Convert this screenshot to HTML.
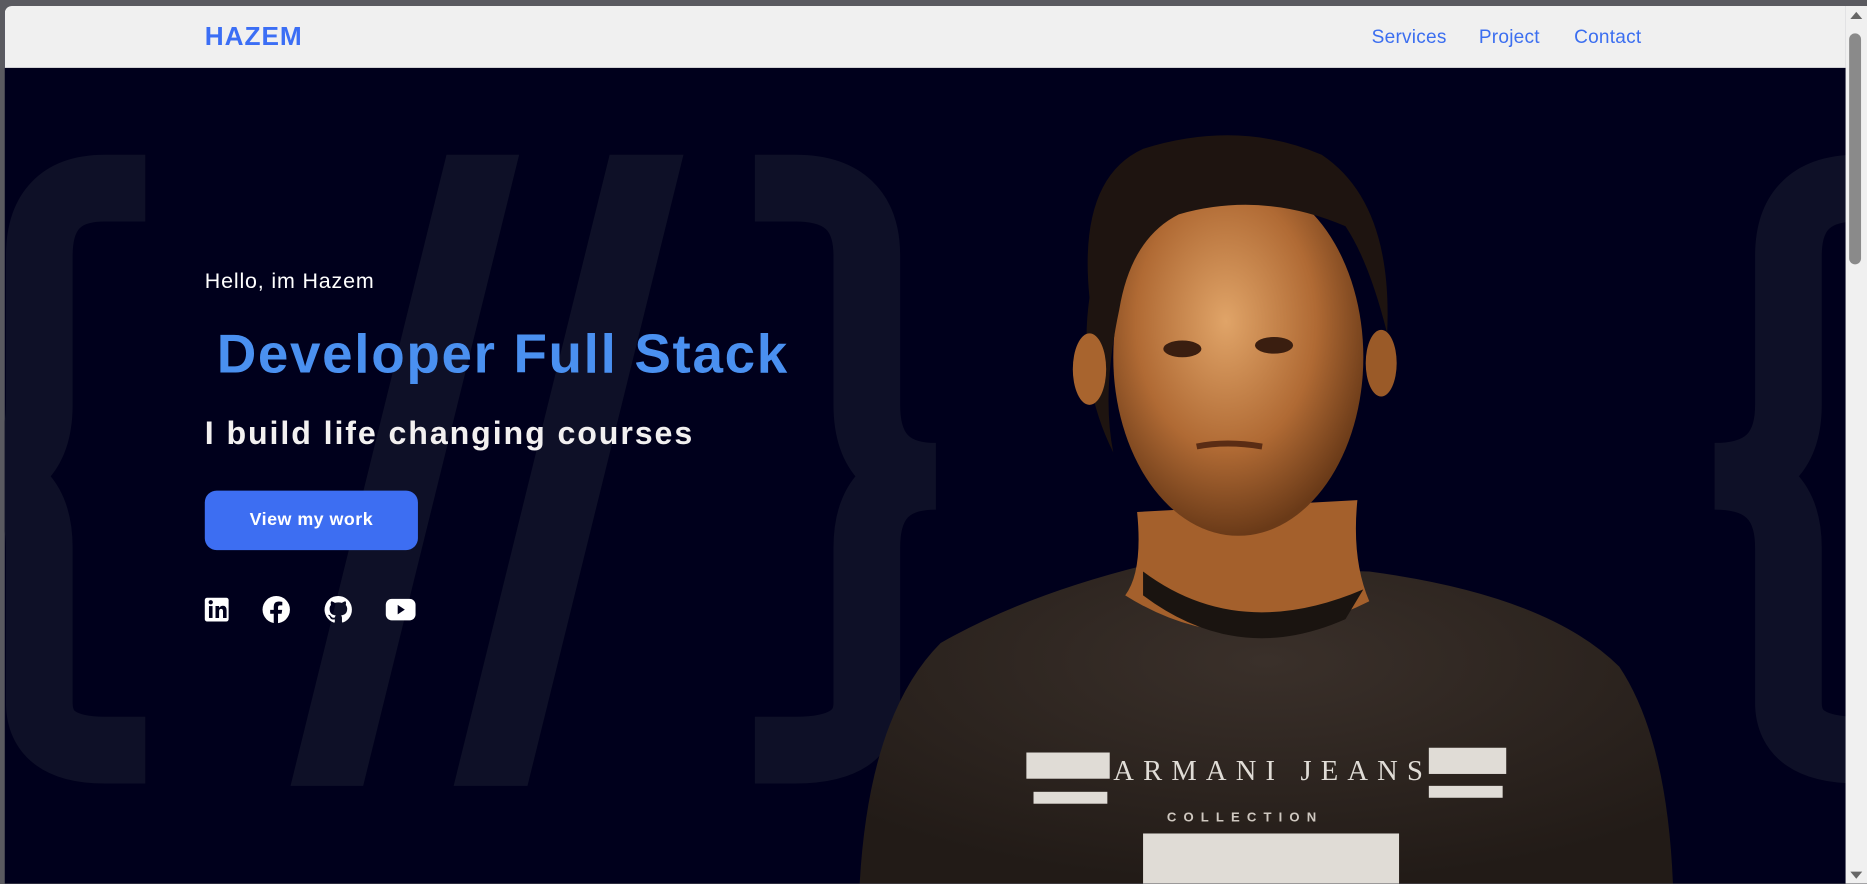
<!DOCTYPE html>
<html><head><meta charset="utf-8">
<style>
html,body{margin:0;padding:0;width:1867px;height:883px;overflow:hidden;background:#5a5a60;}
#s{position:absolute;left:0;top:0;width:1568px;height:742px;transform:scale(1.19069);transform-origin:0 0;font-family:"Liberation Sans",sans-serif;}
#win{position:absolute;left:4px;top:5px;width:1564px;height:737px;background:#00001c;border-radius:6px 0 0 0;overflow:hidden;}
#hdr{position:absolute;left:0;top:0;width:1546px;height:52px;background:#f0f0f0;}
.logo{position:absolute;left:168px;top:13px;font-size:22px;font-weight:bold;color:#3b6ef5;letter-spacing:0.8px}
.nav{position:absolute;top:18px;font-size:16px;color:#3b6ef0;letter-spacing:0.2px}
#sb{position:absolute;left:1546px;top:0;width:18px;height:737px;background:#f0f0f0}
#thumb{position:absolute;left:3px;top:23px;width:10px;height:194px;background:#8a8a8a;border-radius:5px}
.t{position:absolute;color:#fff;white-space:nowrap}
.btn{position:absolute;left:168px;top:407px;width:179px;height:50px;background:#3d6ef2;border-radius:10px;color:#fff;font-weight:bold;font-size:15px;text-align:center;line-height:50px;letter-spacing:0.4px}
</style></head><body>
<div id="s">
<div id="win">
<svg style="position:absolute;left:-4px;top:-5px" width="1568" height="742" viewBox="0 0 1568 742">
 <g fill="none" stroke="#0e1027" stroke-width="56">
  <path d="M122,158 H88 Q33,158 33,215 V340 Q33,400 -25,400 Q33,400 33,460 V590 Q33,630 88,630 H122"/>
  <path d="M634,158 H668 Q728,158 728,215 V340 Q728,400 786,400 Q728,400 728,460 V590 Q728,630 668,630 H634"/>
  <path d="M1580,158 H1560 Q1502,158 1502,215 V340 Q1502,400 1440,400 Q1502,400 1502,460 V590 Q1502,630 1560,630 H1580"/>
 </g>
 <g fill="#0e1027">
  <polygon points="375,130 436,130 305,660 244,660"/>
  <polygon points="512,130 574,130 443,660 381,660"/>
 </g>
 <defs>
  <radialGradient id="sk" cx="0.45" cy="0.4" r="0.6"><stop offset="0" stop-color="#e0a468"/><stop offset="0.6" stop-color="#b06a34"/><stop offset="1" stop-color="#6a3a18"/></radialGradient>
  <radialGradient id="sh" cx="0.5" cy="0.3" r="0.7"><stop offset="0" stop-color="#3a302a"/><stop offset="1" stop-color="#221b17"/></radialGradient>
 </defs>
 <path d="M722,742 Q730,600 790,540 Q860,500 960,475 L1150,480 Q1300,500 1360,560 Q1400,620 1405,742 Z" fill="url(#sh)"/>
 <path d="M955,430 Q960,480 945,500 Q1040,560 1150,505 Q1135,470 1140,420 Z" fill="#a4602c"/>
 <path d="M960,480 Q1040,540 1145,495 L1130,520 Q1040,560 960,500Z" fill="#1a1410"/>
 <ellipse cx="1040" cy="300" rx="105" ry="150" fill="url(#sk)"/>
 <path d="M915,250 Q905,150 960,125 Q1040,100 1110,130 Q1170,170 1165,280 Q1150,220 1130,190 Q1060,160 990,180 Q950,200 940,260 Q925,330 935,380 Q905,320 915,250Z" fill="#1e1410"/>
 <ellipse cx="915" cy="310" rx="14" ry="30" fill="#a8642e"/>
 <ellipse cx="1160" cy="305" rx="13" ry="28" fill="#9a5a28"/>
 <ellipse cx="993" cy="293" rx="16" ry="7" fill="#3a1e10"/>
 <ellipse cx="1070" cy="290" rx="16" ry="7" fill="#3a1e10"/>
 <path d="M1005,375 Q1030,370 1060,375" stroke="#5a2c14" stroke-width="5" fill="none"/>
 <g fill="#e0dcd6">
  <rect x="862" y="632" width="70" height="22"/><rect x="1200" y="628" width="65" height="22"/>
  <rect x="868" y="665" width="62" height="10"/><rect x="1200" y="660" width="62" height="10"/>
  <rect x="960" y="700" width="215" height="42"/>
 </g>
 <text x="935" y="655" fill="#e0dcd6" font-family="Liberation Serif,serif" font-size="24" textLength="260">ARMANI JEANS</text>
 <text x="980" y="690" fill="#cfc8c0" font-family="Liberation Sans,sans-serif" font-size="11" font-weight="bold" letter-spacing="6">COLLECTION</text>
</svg>
<div id="hdr">
 <div class="logo">HAZEM</div>
 <div class="nav" style="left:1148px">Services</div>
 <div class="nav" style="left:1238px">Project</div>
 <div class="nav" style="left:1318px">Contact</div>
</div>
<div id="sb"><div style="position:absolute;left:4px;top:5px;width:0;height:0;border-left:5px solid transparent;border-right:5px solid transparent;border-bottom:6px solid #666"></div><div id="thumb"></div><div style="position:absolute;left:4px;top:727px;width:0;height:0;border-left:5px solid transparent;border-right:5px solid transparent;border-top:6px solid #666"></div></div>
<div class="t" style="left:168px;top:221px;font-size:18px;letter-spacing:0.7px">Hello, im Hazem</div>
<div class="t" style="left:178px;top:265px;font-size:46px;font-weight:bold;color:#4a90f0;letter-spacing:1.4px">Developer Full Stack</div>
<div class="t" style="left:168px;top:344px;font-size:27px;font-weight:bold;letter-spacing:1.6px;color:#f2f0f0">I build life changing courses</div>
<div class="btn">View my work</div>
<svg style="position:absolute;left:164px;top:495px" width="190" height="32" viewBox="0 0 190 32">
 <rect x="4" y="2" width="20" height="20" rx="2" fill="#fff"/>
 <rect x="7.5" y="9" width="3" height="10" fill="#00001c"/><circle cx="9" cy="5.8" r="1.8" fill="#00001c"/>
 <path d="M13,9 h3 v1.5 q1.2,-1.8 3.3,-1.8 q3,0 3,4 v6.3 h-3 v-5.6 q0,-2 -1.6,-2 q-1.7,0 -1.7,2 v5.6 h-3z" fill="#00001c"/>
 <circle cx="64" cy="12" r="11.5" fill="#fff"/>
 <path d="M65.5,24 v-8.5 h3 l0.5,-3.3 h-3.5 v-2.2 q0,-1.6 1.7,-1.6 h1.9 v-2.9 q-1.5,-0.3 -3,-0.3 q-4.2,0 -4.2,4.4 v2.6 h-3 v3.3 h3 v8.5z" fill="#00001c"/>
 <path d="M116,0.5 a11.5,11.5 0 0 0 -3.6,22.4 c0.6,0.1 0.8,-0.3 0.8,-0.6 v-2.1 c-3.2,0.7 -3.9,-1.5 -3.9,-1.5 c-0.5,-1.3 -1.3,-1.7 -1.3,-1.7 c-1,-0.7 0.1,-0.7 0.1,-0.7 c1.2,0.1 1.8,1.2 1.8,1.2 c1,1.8 2.7,1.3 3.4,1 c0.1,-0.8 0.4,-1.3 0.7,-1.6 c-2.6,-0.3 -5.2,-1.3 -5.2,-5.7 c0,-1.3 0.4,-2.3 1.2,-3.1 c-0.1,-0.3 -0.5,-1.5 0.1,-3 c0,0 1,-0.3 3.2,1.2 a11,11 0 0 1 5.8,0 c2.2,-1.5 3.2,-1.200 3.2,-1.2 c0.6,1.6 0.2,2.8 0.1,3 c0.7,0.8 1.2,1.9 1.2,3.1 c0,4.4 -2.7,5.4 -5.2,5.7 c0.4,0.4 0.8,1.1 0.8,2.1 v3.2 c0,0.3 0.2,0.7 0.8,0.6 A11.5,11.5 0 0 0 116,0.5z" fill="#fff"/>
 <rect x="156" y="3" width="25" height="18" rx="5" fill="#fff"/>
 <path d="M166,8 l6,4 l-6,4z" fill="#00001c"/>
</svg>
</div>
</div>
</body></html>
